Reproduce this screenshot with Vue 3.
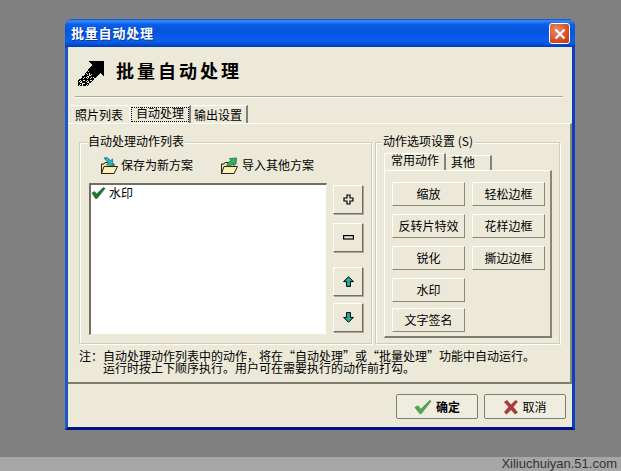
<script setup>
const tabs = [
  { label: '照片列表', cls: 'first' },
  { label: '自动处理', cls: 'active' },
  { label: '输出设置', cls: 'last' }
]

const actions = [
  ['缩放', '轻松边框'],
  ['反转片特效', '花样边框'],
  ['锐化', '撕边边框'],
  ['水印'],
  ['文字签名']
]

// dithered pixels for the dissolving tail of the header arrow
const specks = []
for (let y = 64; y < 85; y++) {
  for (let x = 78; x < 99; x++) {
    const across = Math.abs(x + y - 163)
    const along = x - y
    if (across < 8 && along < 30 && along > -6 && (x * 3 + y * 5 + (x * y) % 7) % 3 !== 0) {
      specks.push([x, y])
    }
  }
}
</script>

<template>
  <div class="stage">
    <div class="window">
      <div class="titlebar">
        <span class="title-text">批量自动处理</span>
        <div class="close">
          <svg width="12" height="12" viewBox="0 0 12 12">
            <path d="M1.5 1.5 L10.5 10.5 M10.5 1.5 L1.5 10.5" stroke="#fff" stroke-width="2.2" fill="none" />
          </svg>
        </div>
      </div>

      <div class="content">
        <div class="header">
          <svg class="header-icon" width="28" height="27" viewBox="77 58 28 27" shape-rendering="crispEdges">
            <rect v-for="(s, i) in specks" :key="i" :x="s[0]" :y="s[1]" width="1" height="1" fill="#000" />
            <path d="M88 59 H104 V75 L100 71 L95 76 L92 71 L87 68 L92 63 Z" fill="#000" />
          </svg>
          <span class="header-text">批量自动处理</span>
        </div>
        <div class="separator"></div>

        <div class="tabs">
          <div v-for="tab in tabs" :key="tab.label" class="tab" :class="tab.cls">
            <span class="tab-label">{{ tab.label }}</span>
          </div>
        </div>

        <div class="page">
          <div class="groups">
            <div class="group group-list">
              <span class="legend">自动处理动作列表</span>
              <div class="toolbar">
                <div class="tool tool-save">
                  <svg width="20" height="18" viewBox="0 0 20 18">
                    <path d="M1.5 7 H4 L5 5.5 H9 V7 H14 V16.5 H1.5 Z" fill="#f4e49a" stroke="#222" />
                    <path d="M1.5 16.5 L4 9.5 H17.5 L14 16.5 Z" fill="#fbf0b0" stroke="#222" />
                    <path d="M4 1 L7 0.5 L10.5 3.5 L12.5 2 L13 8.5 L6.5 8 L8.5 6 Z" fill="#2bb5c4" stroke="#0b6a78" stroke-width=".7" />
                  </svg>
                  <span>保存为新方案</span>
                </div>
                <div class="tool tool-import">
                  <svg width="17" height="18" viewBox="0 0 17 18">
                    <path d="M.5 7 H3 L4 5.5 H8 V7 H13 V16.5 H.5 Z" fill="#f4e49a" stroke="#222" />
                    <path d="M.5 16.5 L3 9.5 H16.5 L13 16.5 Z" fill="#fbf0b0" stroke="#222" />
                    <path d="M6 9 L6.5 6 L10 3.5 L8.5 1.5 L15.5 1 L15 7.5 L13 5.8 L9.5 9 Z" fill="#35b060" stroke="#0c6a34" stroke-width=".7" />
                  </svg>
                  <span>导入其他方案</span>
                </div>
              </div>

              <div class="list-row">
                <div class="listbox">
                  <div class="list-item">
                    <svg width="15" height="12" viewBox="0 0 15 12">
                      <path d="M1 6 L3.5 4.5 L5.5 7 L12.5 .5 L14 1.5 L6 11.5 H4.5 Z" fill="#1f7a2e" stroke="#0d4a1a" stroke-width=".6" />
                    </svg>
                    <span>水印</span>
                  </div>
                </div>
                <div class="side">
                  <div class="btn side-btn">
                    <svg width="11" height="11" viewBox="0 0 11 11">
                      <path d="M4 1 H7 V4 H10 V7 H7 V10 H4 V7 H1 V4 H4 Z" fill="#ece9d8" stroke="#000" stroke-width="1.2" />
                    </svg>
                  </div>
                  <div class="btn side-btn minus">
                    <svg width="11" height="5" viewBox="0 0 11 5">
                      <rect x=".6" y=".6" width="9.8" height="3.4" fill="#ece9d8" stroke="#000" stroke-width="1.2" />
                    </svg>
                  </div>
                  <div class="btn side-btn up">
                    <svg width="11" height="11" viewBox="0 0 11 11">
                      <path d="M5.5 .7 L10.4 5.6 H7.5 V10.4 H3.5 V5.6 H.6 Z" fill="#25a79a" stroke="#000" />
                    </svg>
                  </div>
                  <div class="btn side-btn down">
                    <svg width="11" height="11" viewBox="0 0 11 11">
                      <path d="M5.5 10.3 L10.4 5.4 H7.5 V.6 H3.5 V5.4 H.6 Z" fill="#25a79a" stroke="#000" />
                    </svg>
                  </div>
                </div>
              </div>
            </div>

            <div class="group group-options">
              <span class="legend">动作选项设置 (S)</span>
              <div class="inner-tabs">
                <div class="inner-tab active">常用动作</div>
                <div class="inner-tab">其他</div>
              </div>
              <div class="inner-page">
                <div v-for="(row, r) in actions" :key="r" class="action-row" :class="{ tight: r === 4 }">
                  <div v-for="name in row" :key="name" class="btn action">{{ name }}</div>
                </div>
              </div>
            </div>
          </div>

          <div class="note">
            <span class="note-label">注：</span>
            <div>
              <div>自动处理动作列表中的动作，将在“自动处理”或“批量处理”功能中自动运行。</div>
              <div>运行时按上下顺序执行。用户可在需要执行的动作前打勾。</div>
            </div>
          </div>
        </div>

        <div class="footer">
          <div class="footer-btn ok">
            <svg width="18" height="16" viewBox="0 0 20 17">
              <path d="M1 9 L4.5 7 L7.5 11 L17.5 1 L19 2 L8 16 H6.5 Z" fill="#4fa84f" stroke="#3c8a40" stroke-width=".6" />
            </svg>
            <span class="ok-text">确定</span>
          </div>
          <div class="footer-btn">
            <svg width="16" height="16" viewBox="0 0 16 16">
              <path d="M1 3 L4 1 L8 5.5 L12.5 1 L15 2.5 L10.5 8 L15 13.5 L12 15.5 L8 11 L3.5 15.5 L1 13 L5.5 8 Z" fill="#a83c3c" />
            </svg>
            <span>取消</span>
          </div>
        </div>
      </div>
    </div>

    <div class="band"><span>Xiliuchuiyan.51.com</span></div>
  </div>
</template>

<style>
html, body {
  margin: 0;
  background: #808080;
}
</style>

<style scoped>
.stage {
  width: 621px;
  height: 471px;
  display: flex;
  flex-direction: column;
  background: #808080;
  font-family: "Noto Sans CJK SC", "Liberation Sans", sans-serif;
  font-size: 12px;
  line-height: 12px;
  color: #000;
  overflow: hidden;
}

.window {
  width: 510px;
  height: 411px;
  margin: 19px 0 0 65px;
  box-sizing: border-box;
  border-left: 3px solid #1b56cc;
  border-right: 3px solid #0a3fc0;
  border-bottom: 3px solid #00138c;
  border-radius: 8px 8px 0 0;
  background: #0a50d8;
  flex: none;
}

.titlebar {
  height: 28px;
  margin: 0 -3px;
  padding: 0 5px 0 6px;
  display: flex;
  align-items: center;
  justify-content: space-between;
  border-radius: 8px 8px 0 0;
  background: linear-gradient(#0a4fd0 0, #3a8df5 2px, #0a5fe8 5px, #0454e0 12px, #0a60ec 22px, #0450d8 25px, #003cb0 28px);
}

.title-text {
  color: #fff;
  font-size: 13px;
  font-weight: 700;
  letter-spacing: .8px;
  margin-top: -1px;
  text-shadow: 1px 1px 0 #0a3a9c;
}

.close {
  width: 19px;
  height: 19px;
  margin-top: 1px;
  display: flex;
  align-items: center;
  justify-content: center;
  border: 1px solid #fff;
  border-radius: 3px;
  background: radial-gradient(circle at 35% 30%, #e98a6a, #d4502c 60%, #b83010);
}

.content {
  height: 380px;
  background: #ece9d8;
  display: flex;
  flex-direction: column;
}

.header {
  height: 49px;
  padding-left: 9px;
  box-sizing: border-box;
  display: flex;
  align-items: center;
}

.header-icon {
  margin-top: 3px;
}

.header-text {
  margin-left: 11px;
  font-size: 18px;
  font-weight: 700;
  letter-spacing: 3px;
  margin-top: -3px;
}

.separator {
  height: 1px;
  width: 488px;
  margin-left: 7px;
  background: #aca899;
  border-bottom: 1px solid #fff;
}

.tabs {
  display: flex;
  height: 18px;
  margin: 7px 0 0 2px;
}

.tab {
  height: 18px;
  box-sizing: border-box;
  padding-top: 3px;
  border-top: 1px solid #fff;
  border-left: 1px solid #fff;
  border-right: 2px solid #808080;
}

.tab.first {
  width: 59px;
  padding-left: 5px;
  border-left: none;
  border-right: none;
}

.tab.active {
  width: 62px;
  padding: 1px 0 0 1px;
  border-right: 2px solid #808080;
}

.tab.active .tab-label {
  display: inline-block;
  padding: 0 5px 3px;
  outline: 1px dotted #000;
  outline-offset: -1px;
}

.tab.last {
  width: 57px;
  padding-left: 3px;
  border-left: none;
}

.page {
  height: 261px;
  box-sizing: border-box;
  border-top: 1px solid #fff;
  border-right: 2px solid #8a8778;
  border-bottom: 2px solid #7f7d6e;
  background: #ece9d8;
  padding: 18px 0 0 11px;
}

.groups {
  display: flex;
  gap: 3px;
}

.group {
  position: relative;
  height: 202px;
  box-sizing: border-box;
  border: 1px solid #cfccba;
  box-shadow: inset 1px 1px 0 #fff, 1px 1px 0 #fff;
}

.legend {
  position: absolute;
  top: -8px;
  left: 7px;
  padding: 0 1px;
  background: #ece9d8;
}

.group-options .legend {
  left: 6px;
}

.group-list {
  width: 293px;
  padding: 14px 0 0 9px;
}

.group-options {
  width: 185px;
  padding: 10px 0 0 8px;
}

.toolbar {
  display: flex;
  height: 18px;
  padding-left: 11px;
}

.tool {
  display: flex;
  align-items: center;
  gap: 1px;
}

.tool span {
  margin-top: -2px;
}

.tool-save {
  width: 121px;
}

.tool-import {
  gap: 4px;
}

.list-row {
  display: flex;
  gap: 6px;
  margin-top: 8px;
}

.listbox {
  width: 238px;
  height: 152px;
  box-sizing: border-box;
  background: #fff;
  border-top: 2px solid #716f64;
  border-left: 2px solid #716f64;
  border-right: 1px solid #ece9d8;
  border-bottom: 1px solid #ece9d8;
}

.list-item {
  display: flex;
  align-items: center;
  gap: 3px;
  padding: 2px 0 0 0;
}

.side {
  display: flex;
  flex-direction: column;
  margin-top: 2px;
}

.btn {
  box-sizing: border-box;
  display: flex;
  align-items: center;
  justify-content: center;
  background: #ece9d8;
  border-top: 1px solid #fff;
  border-left: 1px solid #fff;
  border-right: 1px solid #716f64;
  border-bottom: 1px solid #716f64;
  box-shadow: 1px 1px 0 #aca899;
}

.side-btn {
  width: 30px;
  height: 29px;
}

.minus {
  margin-top: 9px;
}

.up {
  margin-top: 15px;
}

.down {
  margin-top: 7px;
}

.inner-tabs {
  display: flex;
  height: 17px;
  align-items: flex-end;
}

.inner-tab {
  width: 46px;
  height: 15px;
  box-sizing: border-box;
  padding: 0 0 0 5px;
  border-top: 1px solid #fff;
  border-right: 2px solid #808080;
}

.inner-tab.active {
  width: 62px;
  height: 17px;
  padding: 0 0 0 6px;
  line-height: 11px;
  border-left: 1px solid #fff;
}

.inner-page {
  width: 168px;
  height: 168px;
  box-sizing: border-box;
  padding: 11px 0 0 7px;
  border-top: 1px solid #fff;
  border-left: 1px solid #fff;
  border-right: 2px solid #8a8778;
  border-bottom: 2px solid #7f7d6e;
}

.action-row {
  display: flex;
  gap: 7px;
  margin-bottom: 8px;
}

.action-row.tight {
  margin-top: -2px;
}

.action {
  width: 73px;
  height: 24px;
  border-right-color: #8a8778;
  border-bottom-color: #8a8778;
  box-shadow: none;
}

.note {
  display: flex;
  margin-top: 6px;
  line-height: 12px;
}

.note-label {
  width: 24px;
  flex: none;
}

.footer {
  flex: 1;
  display: flex;
  justify-content: flex-end;
  gap: 6px;
  padding: 10px 6px 0 0;
}

.footer-btn {
  width: 82px;
  height: 25px;
  box-sizing: border-box;
  display: flex;
  align-items: center;
  justify-content: center;
  gap: 3px;
  border: 1px solid #7f7d6e;
  border-radius: 2px;
  background: #efede0;
}

.footer-btn.ok {
  gap: 4px;
}

.ok-text {
  font-weight: 700;
}

.band {
  flex: 1;
  margin-top: 27px;
  background: #a6a6a6;
  display: flex;
  justify-content: flex-end;
  align-items: center;
  padding-right: 4px;
  font-family: "Liberation Sans", sans-serif;
  font-size: 13px;
  color: #333;
}
</style>
